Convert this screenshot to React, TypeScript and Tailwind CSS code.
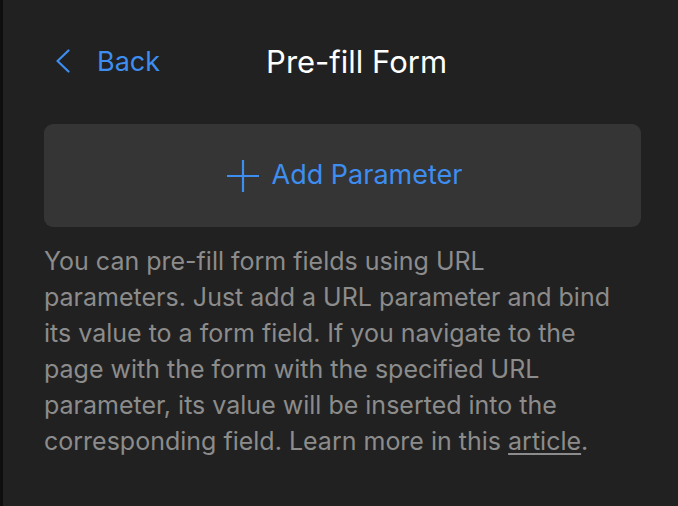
import React from 'react'

function ChevronLeft() {
  return (
    <svg width="14" height="24" viewBox="0 0 14 24" fill="none" className="shrink-0">
      <path d="M12.5 1.5 L1.5 12 L12.5 22.5" stroke="#3d8ef0" strokeWidth="2.2" strokeLinecap="round" strokeLinejoin="round" />
    </svg>
  )
}

function PlusIcon() {
  return (
    <svg width="32" height="32" viewBox="0 0 32 32" fill="none" className="shrink-0">
      <path d="M16 0 V32 M0 16 H32" stroke="#3d8ef0" strokeWidth="2.2" />
    </svg>
  )
}

export default function App() {
  return (
    <div
      className="h-[506px] w-[678px] overflow-hidden bg-[#212121] border-l-[3px] border-[#0e0e0e] pl-[41px] pr-[37px]"
      style={{ fontFamily: 'Inter, "Noto Sans", sans-serif' }}
    >
      <div className="flex items-center h-[42px] mt-[40px] pl-[12px]">
        <button className="flex items-center gap-[27px] text-[#3d8ef0] text-[27px] leading-none">
          <ChevronLeft />
          <span>Back</span>
        </button>
        <h1 className="ml-[106px] text-white text-[31px] leading-none font-normal">Pre-fill Form</h1>
      </div>

      <button className="mt-[42px] w-full h-[103px] rounded-[9px] bg-[#353535] flex items-center justify-center gap-[13px] pl-[4px] text-[#3d8ef0] text-[27px]">
        <PlusIcon />
        <span>Add Parameter</span>
      </button>

      <p className="mt-[16px] max-w-[584px] text-[#8c8c8c] text-[25px] leading-[36px]">
        You can pre-fill form fields using URL parameters. Just add a URL parameter and bind its value to a form field. If you navigate to the page with the form with the specified URL parameter, its value will be inserted into the corresponding field. Learn more in this{' '}
        <a className="underline underline-offset-[3px]">article</a>.
      </p>
    </div>
  )
}
